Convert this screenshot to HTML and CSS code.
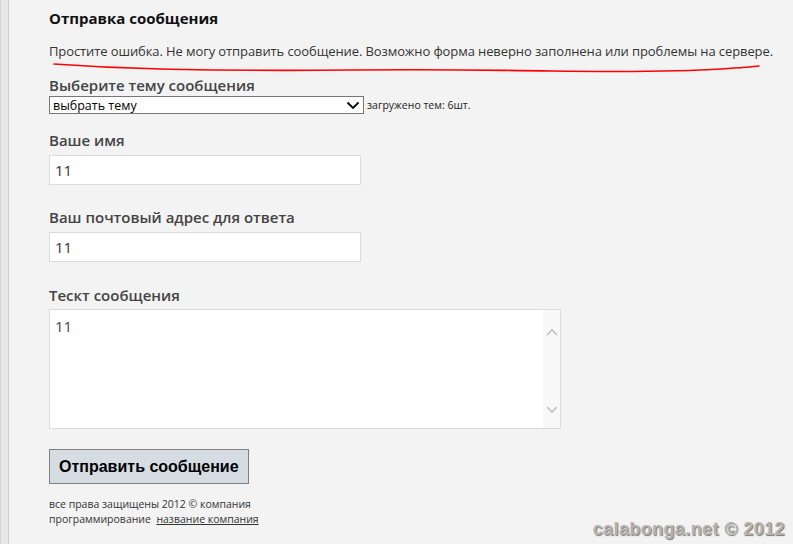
FILE: index.html
```html
<!DOCTYPE html>
<html lang="ru">
<head>
    <meta charset="UTF-8">
    <title>Отправка сообщения</title>
    <link rel="stylesheet" href="styles.css">
</head>
<body>
    <div class="page">
        <div class="rail"></div>
        <div class="content">
            <h1>Отправка сообщения</h1>

            <div class="error">
                Простите ошибка. Не могу отправить сообщение. Возможно форма неверно заполнена или проблемы на сервере.
                <svg class="scribble" width="720" height="14" viewBox="0 0 720 14">
                    <path d="M3 3 C 30 5, 60 7, 110 8 S 200 10, 300 9 S 420 9, 500 10 S 640 10, 670 8 S 700 6, 708 5" fill="none" stroke="#f00" stroke-width="1.6" stroke-linecap="round"/>
                </svg>
            </div>

            <div class="field topic">
                <label for="topic">Выберите тему сообщения</label>
                <div class="select-row">
                    <div class="select" id="topic">
                        <span>выбрать тему</span>
                        <svg width="14" height="9" viewBox="0 0 14 9"><path d="M1.5 1.5 L7 7 L12.5 1.5" fill="none" stroke="#000" stroke-width="1.8"/></svg>
                    </div>
                    <span class="hint">загружено тем: 6шт.</span>
                </div>
            </div>

            <div class="field name">
                <label for="name">Ваше имя</label>
                <input type="text" id="name" value="11">
            </div>

            <div class="field">
                <label for="email">Ваш почтовый адрес для ответа</label>
                <input type="text" id="email" value="11">
            </div>

            <div class="field message">
                <label for="body">Тескт сообщения</label>
                <div class="textarea" id="body">
                    <div class="textarea-text">11</div>
                    <div class="scrollbar">
                        <svg width="12" height="8" viewBox="0 0 12 8"><path d="M1 7 L6 2 L11 7" fill="none" stroke="#c2c2c2" stroke-width="1.6"/></svg>
                        <svg width="12" height="8" viewBox="0 0 12 8"><path d="M1 1 L6 6 L11 1" fill="none" stroke="#c2c2c2" stroke-width="1.6"/></svg>
                    </div>
                </div>
            </div>

            <button class="submit">Отправить сообщение</button>

            <div class="footer">
                <div>все права защищены 2012 © компания</div>
                <div>программирование&nbsp; <a href="#">название компания</a></div>
            </div>
        </div>
    </div>
    <div class="watermark">calabonga.net © 2012</div>
</body>
</html>
```

FILE: styles.css
```css
body {
    margin: 0;
    background: #f3f3f3;
    font-family: 'Open Sans', 'DejaVu Sans', sans-serif;
    color: #333;
    overflow: hidden;
}
.page {
    display: flex;
    height: 544px;
}
.rail {
    width: 7px;
    background: #e7e7e7;
    border-left: 1px solid #d6d6d6;
    border-right: 1px solid #cfcfcf;
    flex-shrink: 0;
}
.content {
    padding: 8px 0 0 40px;
}
h1 {
    font-size: 15px;
    font-weight: bold;
    color: #111;
    margin: 0 0 14px 0;
    line-height: 20px;
}
.error {
    position: relative;
    font-size: 13px;
    line-height: 18px;
    color: #333;
    white-space: nowrap;
    letter-spacing: -0.1px;
}
.scribble {
    position: absolute;
    left: 2px;
    top: 19px;
}
.field {
    margin-top: 22px;
}
.field.topic {
    margin-top: 15px;
}
.field.name {
    margin-top: 16px;
}
.field.message {
    margin-top: 23px;
}
label {
    display: block;
    font-size: 15px;
    font-weight: 600;
    color: #444;
    line-height: 20px;
    margin-bottom: 5px;
}
.topic label {
    margin-bottom: 1px;
}
.message label {
    margin-bottom: 4px;
}
.select-row {
    display: flex;
    align-items: center;
}
.select {
    height: 16px;
    width: 307px;
    border: 1px solid #767676;
    background: #fff;
    display: flex;
    align-items: center;
    justify-content: space-between;
    padding: 0 3px 0 3px;
    font-size: 12.5px;
    color: #000;
}
.hint {
    font-size: 10.5px;
    color: #222;
    margin-left: 3px;
}
input[type="text"] {
    display: block;
    width: 312px;
    height: 30px;
    box-sizing: border-box;
    border: 1px solid #dcdcdc;
    background: #fff;
    padding: 0 5px;
    font-family: 'Open Sans', sans-serif;
    font-size: 15px;
    color: #333;
    outline: none;
}
.textarea {
    display: flex;
    width: 512px;
    height: 120px;
    box-sizing: border-box;
    border: 1px solid #dcdcdc;
    background: #fff;
}
.textarea-text {
    flex: 1;
    padding: 6px 5px;
    font-size: 15px;
    line-height: 20px;
    color: #444;
}
.scrollbar {
    width: 17px;
    background: #f8f8f8;
    display: flex;
    flex-direction: column;
    justify-content: space-between;
    align-items: center;
    padding: 18px 0 14px 0;
}
.submit {
    display: block;
    margin-top: 20px;
    height: 35px;
    padding: 0 9px;
    border: 1px solid #808080;
    background: #d5dce2;
    font-family: 'Liberation Sans', Arial, sans-serif;
    font-size: 16px;
    font-weight: bold;
    color: #000;
}
.footer {
    margin-top: 13px;
    font-size: 10.5px;
    line-height: 15px;
    color: #333;
}
.footer a {
    color: #333;
    text-decoration: underline;
}
.watermark {
    position: absolute;
    right: 8px;
    bottom: 4px;
    font-family: 'Liberation Sans', Arial, sans-serif;
    font-size: 18px;
    font-weight: bold;
    color: #b4b4b4;
    text-shadow: 1px 1px 1px #7a7a7a;
    letter-spacing: 0.4px;
}
```
